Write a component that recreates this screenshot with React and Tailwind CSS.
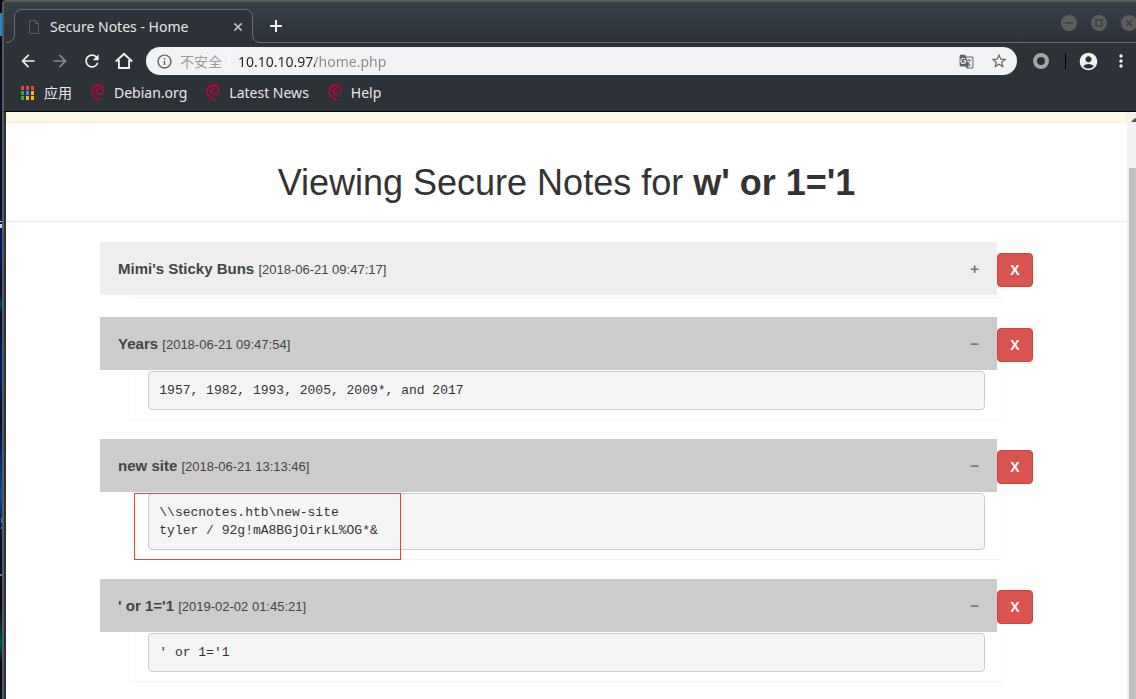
import { useState } from "react";
import {
  MdAccountCircle,
  MdArrowBack,
  MdArrowForward,
  MdGTranslate,
  MdInfoOutline,
  MdMoreVert,
  MdRefresh,
  MdStarBorder,
} from "react-icons/md";

const NOTES = [
  { title: "Mimi's Sticky Buns", date: "[2018-06-21 09:47:17]", body: "", open: false },
  { title: "Years", date: "[2018-06-21 09:47:54]", body: "1957, 1982, 1993, 2005, 2009*, and 2017", open: true },
  {
    title: "new site",
    date: "[2018-06-21 13:13:46]",
    body: "\\\\secnotes.htb\\new-site\ntyler / 92g!mA8BGjOirkL%OG*&",
    open: true,
    marked: true,
  },
  { title: "' or 1='1", date: "[2019-02-02 01:45:21]", body: "' or 1='1", open: true },
];

const BOOKMARKS = ["Debian.org", "Latest News", "Help"];

function DesktopEdge() {
  return (
    <svg className="h-[699px] w-[2px]" viewBox="0 0 2 699" preserveAspectRatio="none" aria-hidden="true">
      <defs>
        <linearGradient id="sky" x1="0" y1="0" x2="0" y2="1">
          <stop offset="0" stopColor="#050a18" />
          <stop offset=".3" stopColor="#04102f" />
          <stop offset=".34" stopColor="#031c66" />
          <stop offset=".42" stopColor="#030d30" />
          <stop offset=".435" stopColor="#07406a" />
          <stop offset=".45" stopColor="#030d30" />
          <stop offset=".53" stopColor="#021f70" />
          <stop offset=".6" stopColor="#020c30" />
          <stop offset=".71" stopColor="#0a4a9c" />
          <stop offset=".76" stopColor="#081336" />
          <stop offset=".87" stopColor="#020714" />
          <stop offset=".92" stopColor="#045058" />
          <stop offset=".95" stopColor="#01060f" />
          <stop offset="1" stopColor="#041220" />
        </linearGradient>
      </defs>
      <rect width="2" height="699" fill="url(#sky)" />
      <rect y="13" width="2" height="23" fill="#1c8bc9" />
      <rect y="221" width="2" height="1" fill="#d8dde6" />
      <rect y="224" width="2" height="4" fill="#c9d2e0" />
      <rect x="1" y="518" width="1" height="5" fill="#3f86cc" />
      <rect x="1" y="527" width="1" height="2" fill="#3f86cc" />
      <rect y="574" width="2" height="2" fill="#2a8fc8" />
    </svg>
  );
}

function WindowIcon({ kind, width = 16 }) {
  return (
    <svg width={width} height="16" viewBox={`0 0 ${width} 16`} aria-hidden="true">
      <circle cx="8" cy="8" r="8" fill="#5d5d5c" />
      <g stroke="#3d4043" strokeWidth="1.6" fill="none">
        {kind === "min" && <path d="M4 8h8" />}
        {kind === "max" && <rect x="5" y="5" width="6" height="6" />}
        {kind === "close" && <path d="M5 5l6 6M11 5l-6 6" />}
      </g>
    </svg>
  );
}

function TabEdge({ flipped }) {
  return (
    <svg
      className={flipped ? "shrink-0 -scale-x-100" : "shrink-0"}
      width="16"
      height="34"
      viewBox="0 0 16 34"
      aria-hidden="true"
    >
      <path d="M0 34v-.5h1A7.500 7.500 0 0 0 8.500 26V8A7.500 7.500 0 0 1 16 .5V34z" fill="#2d3138" />
      <path d="M0 33.500h1A7.500 7.500 0 0 0 8.500 26V8A7.500 7.500 0 0 1 16 .5" fill="none" stroke="#666c73" />
    </svg>
  );
}

function TabStrip() {
  return (
    <div className="flex h-[41px] items-end overflow-hidden bg-linear-to-b from-[#384048] to-[#2c3137] pl-[2px]">
      <TabEdge />
      <div className="flex h-[34px] w-[223px] shrink-0 items-center border-t border-[#666c73] bg-[#2d3138] pr-[2px] pl-[6px]">
        <svg width="12" height="14" viewBox="0 0 12 14" fill="none" stroke="#5c5c5c" aria-hidden="true">
          <path d="M1.500.5h6l3 3v10h-9zM7.500.5v3h3" />
        </svg>
        <span className="ml-[10px] flex-1 pb-px text-[14px] whitespace-nowrap text-[#e6e6e6]">Secure Notes - Home</span>
        <button aria-label="Close tab" className="text-[#bdbdbd]">
          <svg width="10" height="10" viewBox="0 0 10 10" stroke="currentColor" strokeWidth="1.7" aria-hidden="true">
            <path d="M1.300 1.300l7.400 7.400M8.700 1.300l-7.400 7.400" />
          </svg>
        </button>
      </div>
      <TabEdge flipped />
      <div className="flex h-full flex-1 items-center justify-between border-b border-[#666c73] pl-[9px]">
        <button aria-label="New tab" className="mt-2 text-[#f1f1f1]">
          <svg width="12" height="12" viewBox="0 0 12 12" stroke="currentColor" strokeWidth="2" aria-hidden="true">
            <path d="M6 0v12M0 6h12" />
          </svg>
        </button>
        <div className="mt-[2px] flex gap-[14px]">
          <button aria-label="Minimize"><WindowIcon kind="min" /></button>
          <button aria-label="Maximize"><WindowIcon kind="max" /></button>
          <button aria-label="Close window"><WindowIcon kind="close" width={15} /></button>
        </div>
      </div>
    </div>
  );
}

function HomeIcon() {
  return (
    <svg width="20" height="20" viewBox="0 0 20 20" fill="none" stroke="currentColor" strokeWidth="1.9" aria-hidden="true">
      <path d="M1.800 10.500L10 2.800l8.200 7.700M4.900 9v8h10.200V9" />
    </svg>
  );
}

function Toolbar() {
  return (
    <div className="flex h-9 items-center pr-[5px] pl-[14px] text-[#f1f1f1]">
      <div className="flex gap-3 pr-3">
        <button aria-label="Back"><MdArrowBack size={20} /></button>
        <button aria-label="Forward" className="text-[#85888c]"><MdArrowForward size={20} /></button>
        <button aria-label="Reload"><MdRefresh size={20} /></button>
        <button aria-label="Home"><HomeIcon /></button>
      </div>
      <div className="flex h-7 flex-1 items-center rounded-full bg-[#f1f3f4] pr-[9px] pl-[10px] text-[#5f6368]">
        <MdInfoOutline size={17} />
        <span className="ml-[7px] text-[14px] text-[#9a9da1]">不安全</span>
        <span className="ml-[7px] h-4 w-px bg-white" />
        <input
          aria-label="Address"
          defaultValue="10.10.10.97/home.php"
          className="ml-2 min-w-0 flex-1 bg-[linear-gradient(to_right,#202124_77px,#85898d_77px)] bg-clip-text text-[14px] text-transparent caret-black outline-none"
        />
        <button aria-label="Translate this page"><MdGTranslate size={15} /></button>
        <button aria-label="Bookmark this page" className="ml-4"><MdStarBorder size={18} /></button>
      </div>
      <button aria-label="Extension" className="ml-4">
        <svg width="16" height="16" viewBox="0 0 16 16" fill="none" stroke="#a5a5a5" strokeWidth="4" aria-hidden="true">
          <circle cx="8" cy="8" r="6" />
        </svg>
      </button>
      <span className="ml-4 h-4 w-px bg-black" />
      <button aria-label="Profile" className="ml-3"><MdAccountCircle size={21} /></button>
      <button aria-label="Menu" className="ml-3"><MdMoreVert size={20} /></button>
    </div>
  );
}

function AppsIcon() {
  const colors = ["#e8453c", "#e8453c", "#e8453c", "#34a853", "#4285f4", "#fbbc05", "#34a853", "#fbbc05", "#fbbc05"];
  return (
    <svg width="13" height="14" viewBox="0 0 13 14" aria-hidden="true">
      {colors.map((c, i) => (
        <rect key={i} x={(i % 3) * 5} y={Math.floor(i / 3) * 5} width="3" height="4" fill={c} />
      ))}
    </svg>
  );
}

function DebianSwirl() {
  return (
    <svg width="14" height="17" viewBox="0 0 14 17" fill="none" stroke="#c4003a" strokeLinecap="round" aria-hidden="true">
      <path d="M9 16C4.500 14 1 11 1 7.200 1 3.500 3.800 1.200 7.200 1.200c3.300 0 5.500 2 5.500 4.800 0 2.600-1.900 4.300-4.100 4.300-2.100 0-3.500-1.200-3.500-2.800 0-1.500 1.200-2.500 2.900-2.500" strokeWidth="1.500" />
      <path d="M3 3.200C4.200 1.700 5.800 1.300 7.500 1.300s3.300.7 4.400 2.200" strokeWidth="2" />
    </svg>
  );
}

function BookmarksBar() {
  return (
    <nav className="flex h-[33px] items-center gap-[19px] border-b border-black pb-[5px] pl-[17px] text-[14px] text-[#e8e8e8]">
      <a href="#apps" className="flex items-center gap-[10px]">
        <AppsIcon />
        应用
      </a>
      {BOOKMARKS.map((name) => (
        <a key={name} href={"#" + name} className="flex items-center gap-[9px] whitespace-nowrap">
          <DebianSwirl />
          {name}
        </a>
      ))}
    </nav>
  );
}

function Note({ note }) {
  const [open, setOpen] = useState(note.open);
  return (
    <article className="mb-[19px]">
      <div className="flex justify-center">
        <button
          aria-expanded={open}
          onClick={() => setOpen(!open)}
          className={
            "flex h-[53px] w-4/5 items-center justify-between px-[18px] pt-[2px] text-left text-[#444] " +
            (open ? "bg-[#ccc]" : "bg-[#eee]")
          }
        >
          <span className="text-[15px]">
            <b>{note.title}</b> <span className="text-[13px]">{note.date}</span>
          </span>
          <span className="text-[15px] font-bold text-[#777]">{open ? "−" : "+"}</span>
        </button>
        <button
          aria-label={"Delete " + note.title}
          className="mb-2 h-[34px] w-9 self-end rounded border border-[#d43f3a] bg-[#d9534f] text-[14px] font-bold text-white"
        >
          X
        </button>
      </div>
      <div className="relative mx-auto min-h-[3px] w-[78%] rounded-b border border-t-0 border-x-[#fafafa] border-b-[#f3f3f3] px-[18px]">
        {open && (
          <div className="pt-px pb-[9px]">
            <pre className="rounded border border-[#ccc] bg-[#f5f5f5] px-[10px] pt-[10px] pb-[9px] font-['Liberation_Mono',monospace] text-[13px] leading-[18px] text-[#333]">
              {note.body}
            </pre>
          </div>
        )}
        {note.marked && open && (
          <div className="pointer-events-none absolute top-px left-1 h-[67px] w-[267px] border border-[#fb3a3a]" />
        )}
      </div>
    </article>
  );
}

export default function App() {
  return (
    <div className="flex min-h-screen w-full overflow-hidden bg-[#030b24]">
      <DesktopEdge />
      <div className="flex min-w-0 flex-1 flex-col rounded-tl border-t-2 border-l-2 border-[#5a5a59] bg-[#2d3138] font-['Noto_Sans','Noto_Sans_CJK_SC',sans-serif]">
        <header>
          <TabStrip />
          <Toolbar />
          <BookmarksBar />
        </header>
        <div className="flex flex-1 pl-[2px]">
          <main className="min-w-0 flex-1 bg-white font-['Liberation_Sans',Arial,sans-serif]">
            <div className="h-[11px] rounded-b border border-t-0 border-[#faebcc] bg-[#fcf8e3]" />
            <h1 className="mt-10 mb-5 border-b border-[#eee] pb-[18px] text-center text-4xl leading-10 text-[#333]">
              Viewing Secure Notes for <b>w' or 1='1</b>
            </h1>
            {NOTES.map((note) => (
              <Note key={note.title} note={note} />
            ))}
          </main>
          <div className="flex w-[9px] flex-col overflow-hidden bg-[#f1f1f1] pl-[2px]" aria-hidden="true">
            <svg className="mt-[6px] ml-[2px] shrink-0" width="8" height="4" viewBox="0 0 8 4" fill="#505050">
              <path d="M0 4l4-4 4 4z" />
            </svg>
            <div className="mt-[46px] flex-1 bg-[#c1c1c1]" />
          </div>
        </div>
      </div>
    </div>
  );
}
